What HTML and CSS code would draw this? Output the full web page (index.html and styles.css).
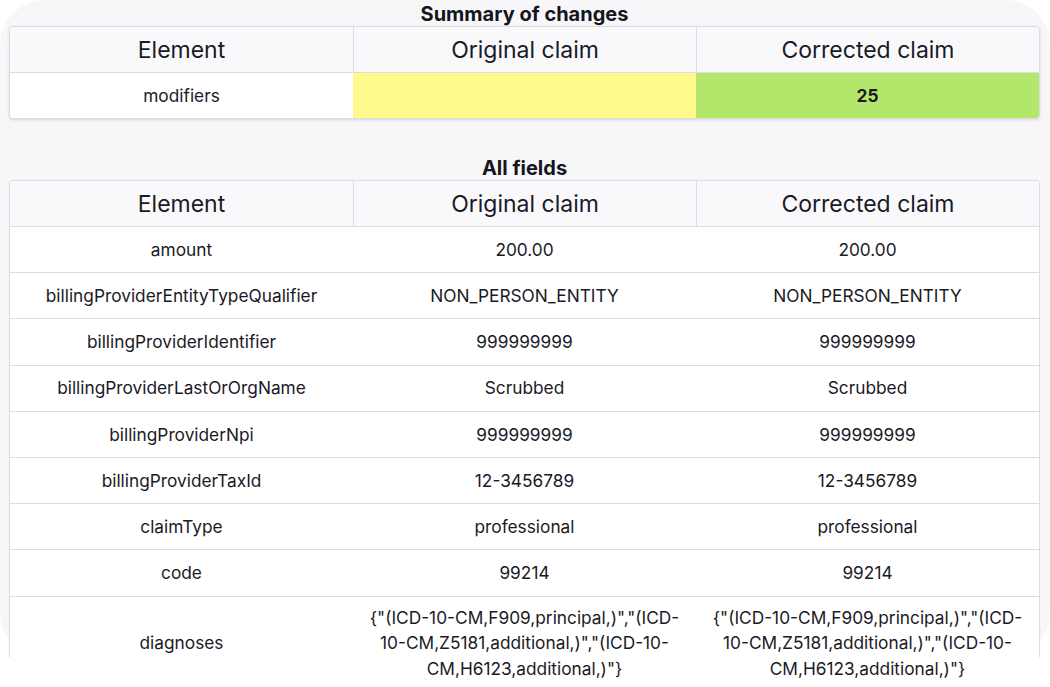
FILE: index.html
```html
<!DOCTYPE html>
<html>
<head>
<meta charset="utf-8">
<link rel="stylesheet" href="styles.css">
</head>
<body>
<div class="panel">
  <h2 class="title">Summary of changes</h2>
  <div class="tbl">
    <div class="grid">
      <div class="th">Element</div>
      <div class="th">Original claim</div>
      <div class="th">Corrected claim</div>
      <div class="td">modifiers</div>
      <div class="td orig"></div>
      <div class="td corr">25</div>
    </div>
  </div>

  <h2 class="title title-second">All fields</h2>
  <div class="tbl tbl-clipped">
    <div class="grid">
      <div class="th">Element</div>
      <div class="th">Original claim</div>
      <div class="th">Corrected claim</div>

      <div class="td">amount</div><div class="td">200.00</div><div class="td">200.00</div>
      <div class="td">billingProviderEntityTypeQualifier</div><div class="td">NON_PERSON_ENTITY</div><div class="td">NON_PERSON_ENTITY</div>
      <div class="td">billingProviderIdentifier</div><div class="td">999999999</div><div class="td">999999999</div>
      <div class="td">billingProviderLastOrOrgName</div><div class="td">Scrubbed</div><div class="td">Scrubbed</div>
      <div class="td">billingProviderNpi</div><div class="td">999999999</div><div class="td">999999999</div>
      <div class="td">billingProviderTaxId</div><div class="td">12-3456789</div><div class="td">12-3456789</div>
      <div class="td">claimType</div><div class="td">professional</div><div class="td">professional</div>
      <div class="td">code</div><div class="td">99214</div><div class="td">99214</div>
      <div class="td multi">diagnoses</div>
      <div class="td multi">{"(ICD-10-CM,F909,principal,)","(ICD-10-CM,Z5181,additional,)","(ICD-10-CM,H6123,additional,)"}</div>
      <div class="td multi">{"(ICD-10-CM,F909,principal,)","(ICD-10-CM,Z5181,additional,)","(ICD-10-CM,H6123,additional,)"}</div>
    </div>
  </div>
</div>
</body>
</html>
```
FILE: styles.css
```css
html, body {
  margin: 0;
  padding: 0;
  background: #ffffff;
}
body {
  min-height: 687px;
  font-family: Inter, "Noto Sans", "Liberation Sans", sans-serif;
  color: #1a1a26;
}
.panel {
  box-sizing: border-box;
  width: 1050px;
  height: 657px;
  background: #f7f7f9;
  border-radius: 45px;
  padding: 3px 10px 0 9px;
}
.title {
  margin: 0;
  font-size: 20px;
  font-weight: 700;
  line-height: 23px;
  text-align: center;
  color: #15151c;
}
.title-second {
  margin-top: 38px;
}
.tbl {
  border: 1px solid #dcdce2;
  border-radius: 4px;
  background: #ffffff;
  box-shadow: 0 1px 3px rgba(0, 0, 0, 0.12);
  overflow: hidden;
}
.tbl-clipped {
  height: 477px;
  box-sizing: border-box;
  overflow: visible;
  border-bottom: none;
  border-radius: 4px 4px 0 0;
  box-shadow: 0 0 2px rgba(0, 0, 0, 0.06);
}
.grid {
  display: grid;
  grid-template-columns: 1fr 1fr 1fr;
}
.th {
  height: 46px;
  box-sizing: border-box;
  display: flex;
  align-items: center;
  justify-content: center;
  background: #f9f9fb;
  border-bottom: 1px solid #dcdce2;
  border-left: 1px solid #dcdce2;
  font-size: 23px;
  font-weight: 400;
}
.th:first-child {
  border-left: none;
}
.td {
  min-height: 46.2px;
  display: flex;
  align-items: center;
  justify-content: center;
  text-align: center;
  background: #ffffff;
  border-bottom: 1px solid #dcdce2;
  font-size: 17.3px;
  line-height: 25.6px;
  padding: 0 16px;
  box-sizing: border-box;
}
.grid > .td:nth-last-child(-n+3) {
  border-bottom: none;
}
.tbl:first-of-type .td {
  min-height: 45px;
}
.multi {
  padding: 8px 16px;
}
.orig {
  background: #fef98b;
}
.corr {
  background: #b3e76b;
  font-weight: 700;
}
```
